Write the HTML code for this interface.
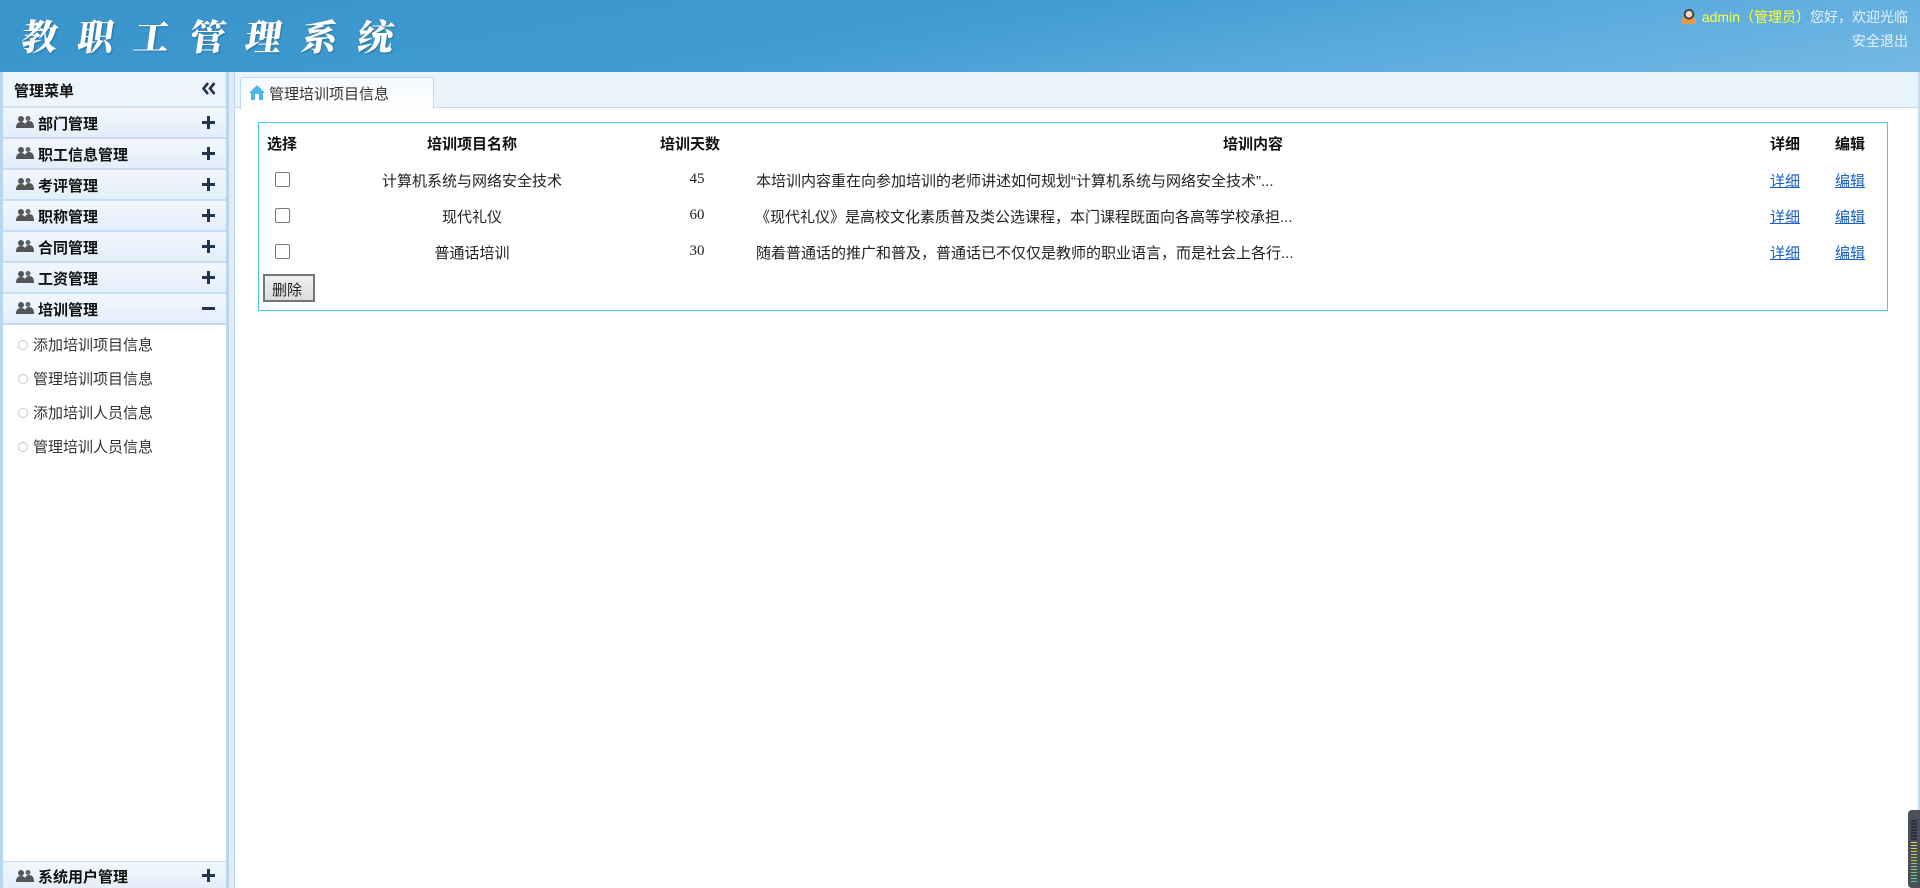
<!DOCTYPE html>
<html><head><meta charset="utf-8"><style>
*{margin:0;padding:0;box-sizing:border-box}
body{width:1920px;height:888px;overflow:hidden;background:#fff;font-family:"Liberation Sans","Noto Sans CJK SC",sans-serif;font-size:15px;color:#222;position:relative}
.abs{position:absolute}
#hdr{left:0;top:0;width:1920px;height:72px;background:linear-gradient(170deg,#3894cb 0%,#3f9bd0 45%,#5aaade 70%,#74b9e3 100%)}
#title{left:22px;top:10px;color:#fff;font-family:"Noto Serif CJK SC",serif;font-size:36px;font-weight:900;letter-spacing:20px;text-shadow:1px 1px 2px rgba(0,0,0,.25);transform:skewX(-8deg)}
.usr{right:12px;top:7px;color:#e8f2fa;font-size:14px}
.usr b{color:#ffff33;font-weight:normal}
#side{left:0;top:72px;width:229px;height:816px;background:#fff;border-left:3px solid #b9d6f0;border-right:3px solid #b9d6f0}
#gap{left:229px;top:72px;width:5px;height:816px;background:#e3ebef}
#main{left:234px;top:72px;width:1686px;height:816px;border-left:1px solid #b9d6f0;border-right:2px solid #c7dcf0}
.mt{left:3px;top:72px;width:223px;height:36px;background:#edf5fc;border-bottom:2px solid #cfe0f2;font-weight:bold;font-size:15px;padding:8px 0 0 11px;color:#111}
.it{left:3px;width:223px;height:31px;background:linear-gradient(#f2f7fd,#e3eefa);border-bottom:2px solid #c6dcf2;font-weight:bold;font-size:15px;color:#111;padding:5px 0 0 35px}
.it .ic{position:absolute;left:13px;top:8px;width:18px;height:12px}
.pl{position:absolute;right:11px;top:8px;width:13px;height:13px}
.pl:before{content:"";position:absolute;left:0;top:5px;width:13px;height:3px;background:#1f3550}
.pl.p:after{content:"";position:absolute;left:5px;top:0;width:3px;height:13px;background:#1f3550}
.sub{left:33px;font-size:15px;color:#333}
.sub:before{content:"";position:absolute;left:-15px;top:6px;width:8px;height:8px;border:1px solid #c8c8c8;border-radius:50%}
#tabbar{left:235px;top:72px;width:1683px;height:36px;background:#e9f3fb;border-bottom:1px solid #c0d8ef}
#tab{left:240px;top:77px;width:194px;height:32px;background:linear-gradient(#f4f9fe,#fff);border:1px solid #c0d8ef;border-bottom:none;border-radius:3px 3px 0 0;padding:5px 0 0 28px;font-size:15px;color:#333}
#box{left:258px;top:122px;width:1630px;height:189px;border:1px solid #4cc4ee}
.th{font-weight:bold;font-size:15px;top:133px;color:#111;text-align:center}
.td{font-size:15px;color:#222}
.c{text-align:center}
.num{font-family:"Liberation Serif",serif;font-size:15px;color:#222;text-align:center;width:60px}
.cb{left:275px;width:15px;height:15px;border:1px solid #777;background:#fff;border-radius:2px}
a.lk{font-size:15px;color:#1a5fc4;text-decoration:underline;width:60px;text-align:center}
#del{left:263px;top:274px;width:52px;height:28px;background:linear-gradient(#f0f0f0,#dcdcdc);border:2px solid #777;font-size:15px;padding:3px 0 0 7px}
</style></head><body>
<div id="hdr" class="abs"></div>
<div id="title" class="abs">教职工管理系统</div>
<div class="abs usr" style="top:7px"><span style="display:inline-block;width:14px;height:15px;vertical-align:-2px;margin-right:6px;background:radial-gradient(circle at 50% 35%,#f5dcc3 0 3px,#444 3.5px 5px,transparent 5.5px),linear-gradient(transparent 60%,#e59a46 60%);border-radius:2px"></span><b>admin（管理员）</b>您好，欢迎光临</div>
<div class="abs usr" style="top:31px">安全退出</div>

<div id="side" class="abs"></div>
<div id="gap" class="abs"></div>
<div id="main" class="abs"></div>
<div class="abs mt">管理菜单<svg style="position:absolute;right:10px;top:10px" width="14" height="13" viewBox="0 0 14 13"><path d="M6 1 L1.5 6.5 L6 12 M12.5 1 L8 6.5 L12.5 12" stroke="#1f3550" stroke-width="2.6" fill="none"/></svg></div>

<div class="abs it" style="top:108px"><svg class="ic" viewBox="0 0 18 12"><circle cx="5" cy="3" r="3" fill="#555"/><circle cx="12" cy="2.5" r="2.5" fill="#666"/><path d="M0 12 Q0 6 5 6 Q10 6 10 12Z M8 12 Q9 5 13 5 Q18 5 18 12Z" fill="#555"/></svg>部门管理<span class="pl p"></span></div>
<div class="abs it" style="top:139px"><svg class="ic" viewBox="0 0 18 12"><circle cx="5" cy="3" r="3" fill="#555"/><circle cx="12" cy="2.5" r="2.5" fill="#666"/><path d="M0 12 Q0 6 5 6 Q10 6 10 12Z M8 12 Q9 5 13 5 Q18 5 18 12Z" fill="#555"/></svg>职工信息管理<span class="pl p"></span></div>
<div class="abs it" style="top:170px"><svg class="ic" viewBox="0 0 18 12"><circle cx="5" cy="3" r="3" fill="#555"/><circle cx="12" cy="2.5" r="2.5" fill="#666"/><path d="M0 12 Q0 6 5 6 Q10 6 10 12Z M8 12 Q9 5 13 5 Q18 5 18 12Z" fill="#555"/></svg>考评管理<span class="pl p"></span></div>
<div class="abs it" style="top:201px"><svg class="ic" viewBox="0 0 18 12"><circle cx="5" cy="3" r="3" fill="#555"/><circle cx="12" cy="2.5" r="2.5" fill="#666"/><path d="M0 12 Q0 6 5 6 Q10 6 10 12Z M8 12 Q9 5 13 5 Q18 5 18 12Z" fill="#555"/></svg>职称管理<span class="pl p"></span></div>
<div class="abs it" style="top:232px"><svg class="ic" viewBox="0 0 18 12"><circle cx="5" cy="3" r="3" fill="#555"/><circle cx="12" cy="2.5" r="2.5" fill="#666"/><path d="M0 12 Q0 6 5 6 Q10 6 10 12Z M8 12 Q9 5 13 5 Q18 5 18 12Z" fill="#555"/></svg>合同管理<span class="pl p"></span></div>
<div class="abs it" style="top:263px"><svg class="ic" viewBox="0 0 18 12"><circle cx="5" cy="3" r="3" fill="#555"/><circle cx="12" cy="2.5" r="2.5" fill="#666"/><path d="M0 12 Q0 6 5 6 Q10 6 10 12Z M8 12 Q9 5 13 5 Q18 5 18 12Z" fill="#555"/></svg>工资管理<span class="pl p"></span></div>
<div class="abs it" style="top:294px"><svg class="ic" viewBox="0 0 18 12"><circle cx="5" cy="3" r="3" fill="#555"/><circle cx="12" cy="2.5" r="2.5" fill="#666"/><path d="M0 12 Q0 6 5 6 Q10 6 10 12Z M8 12 Q9 5 13 5 Q18 5 18 12Z" fill="#555"/></svg>培训管理<span class="pl"></span></div>
<div class="abs sub" style="top:334px">添加培训项目信息</div>
<div class="abs sub" style="top:368px">管理培训项目信息</div>
<div class="abs sub" style="top:402px">添加培训人员信息</div>
<div class="abs sub" style="top:436px">管理培训人员信息</div>
<div class="abs it" style="top:861px;height:27px;border-top:1px solid #c6dcf2;border-bottom:none;padding-top:4px"><svg class="ic" viewBox="0 0 18 12"><circle cx="5" cy="3" r="3" fill="#555"/><circle cx="12" cy="2.5" r="2.5" fill="#666"/><path d="M0 12 Q0 6 5 6 Q10 6 10 12Z M8 12 Q9 5 13 5 Q18 5 18 12Z" fill="#555"/></svg>系统用户管理<span class="pl p" style="top:7px"></span></div>

<div id="tabbar" class="abs"></div>
<div id="tab" class="abs"><svg style="position:absolute;left:7px;top:6px" width="18" height="17" viewBox="0 0 18 17"><path d="M9 1 L17 9 H15 V16 H3 V9 H1Z" fill="#4cb6e6"/><rect x="7" y="10" width="4" height="6" fill="#fff"/></svg>管理培训项目信息</div>

<div id="box" class="abs"></div>
<div class="abs th" style="left:267px">选择</div>
<div class="abs th" style="left:372px;width:200px">培训项目名称</div>
<div class="abs th" style="left:640px;width:100px">培训天数</div>
<div class="abs th" style="left:1153px;width:200px">培训内容</div>
<div class="abs th" style="left:1755px;width:60px">详细</div>
<div class="abs th" style="left:1820px;width:60px">编辑</div>

<div class="abs cb" style="top:172px"></div>
<div class="abs cb" style="top:208px"></div>
<div class="abs cb" style="top:244px"></div>
<div class="abs td c" style="left:372px;width:200px;top:170px">计算机系统与网络安全技术</div>
<div class="abs td c" style="left:372px;width:200px;top:206px">现代礼仪</div>
<div class="abs td c" style="left:372px;width:200px;top:242px">普通话培训</div>
<div class="abs num" style="left:667px;top:171px">45</div>
<div class="abs num" style="left:667px;top:207px">60</div>
<div class="abs num" style="left:667px;top:243px">30</div>
<div class="abs td" style="left:756px;top:170px">本培训内容重在向参加培训的老师讲述如何规划“计算机系统与网络安全技术”...</div>
<div class="abs td" style="left:755px;top:206px">《现代礼仪》是高校文化素质普及类公选课程，本门课程既面向各高等学校承担...</div>
<div class="abs td" style="left:756px;top:242px">随着普通话的推广和普及，普通话已不仅仅是教师的职业语言，而是社会上各行...</div>
<a class="abs lk" style="left:1755px;top:170px">详细</a><a class="abs lk" style="left:1820px;top:170px">编辑</a>
<a class="abs lk" style="left:1755px;top:206px">详细</a><a class="abs lk" style="left:1820px;top:206px">编辑</a>
<a class="abs lk" style="left:1755px;top:242px">详细</a><a class="abs lk" style="left:1820px;top:242px">编辑</a>
<div id="del" class="abs">删除</div>

<div class="abs" style="left:1908px;top:810px;width:12px;height:78px;background:#4a4f5a;border-radius:4px 0 0 4px">
<div style="position:absolute;left:3px;top:10px;width:6px;height:20px;background:repeating-linear-gradient(#2c3038 0 2px,#4a4f5a 2px 3px)"></div>
<div style="position:absolute;left:3px;top:32px;width:6px;height:42px;background:repeating-linear-gradient(transparent 0 1px,#4a4f5a 1px 3px),linear-gradient(#e8d44a,#9ccf5a,#3fd0a8)"></div>
</div>
</body></html>
